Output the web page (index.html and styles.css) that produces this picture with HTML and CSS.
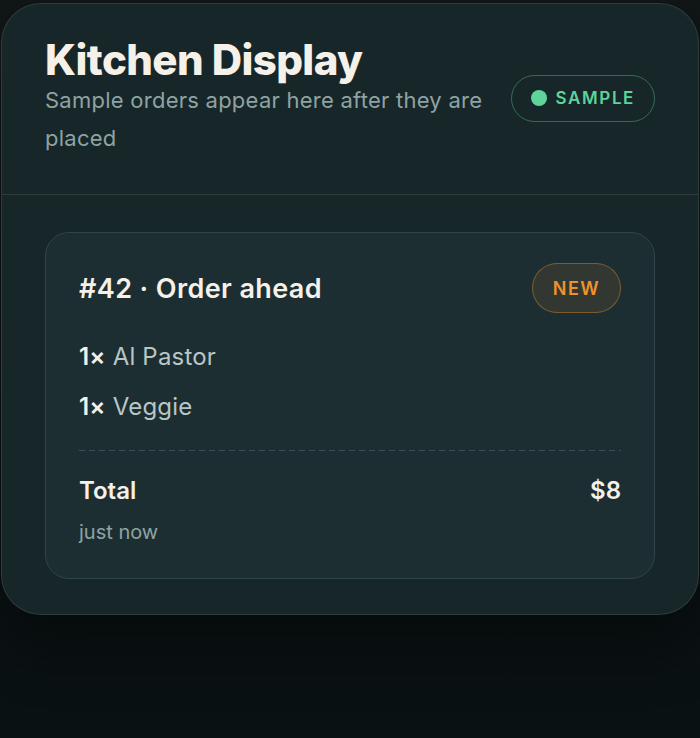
FILE: index.html
```html
<!DOCTYPE html>
<html lang="en">
<head>
    <meta charset="UTF-8">
    <title>Kitchen Display</title>
    <link rel="stylesheet" href="styles.css">
</head>
<body>
    <div class="kds">
        <div class="kds-header">
            <div class="kds-heading">
                <h1>Kitchen Display</h1>
                <p>Sample orders appear here after they are placed</p>
            </div>
            <span class="sample-pill"><span class="dot"></span>SAMPLE</span>
        </div>
        <div class="kds-orders">
            <div class="order-card">
                <div class="order-top">
                    <span class="order-title">#42 · Order ahead</span>
                    <span class="new-pill">NEW</span>
                </div>
                <ul class="order-items">
                    <li><b>1×</b> Al Pastor</li>
                    <li><b>1×</b> Veggie</li>
                </ul>
                <div class="order-total">
                    <span>Total</span>
                    <span>$8</span>
                </div>
                <div class="order-time">just now</div>
            </div>
        </div>
    </div>
</body>
</html>
```

FILE: styles.css
```css
body {
    margin: 0;
    min-height: 738px;
    background: linear-gradient(180deg, #111617 0%, #0c1315 60%, #0a1113 100%);
    font-family: Inter, "Noto Sans", sans-serif;
    color: #f3efe8;
}

.kds {
    margin: 3px 1px 0;
    background: #172629;
    border: 1px solid rgba(255,255,255,0.1);
    border-radius: 40px;
    box-shadow: 0 30px 60px rgba(0,0,0,0.45);
    overflow: hidden;
}

.kds-header {
    display: flex;
    align-items: center;
    gap: 28px;
    padding: 35px 43px 37px;
    border-bottom: 1px solid rgba(255,255,255,0.1);
}

.kds-heading {
    flex: 1;
}

.kds-heading h1 {
    margin: 0;
    font-weight: 800;
    font-size: 42px;
    line-height: 42px;
    letter-spacing: -0.6px;
    color: #f5f0e8;
}

.kds-heading p {
    margin: 0;
    font-size: 22px;
    line-height: 38px;
    letter-spacing: 0.25px;
    color: #8ea3a3;
}

.sample-pill {
    display: flex;
    align-items: center;
    gap: 9px;
    padding: 0 19px;
    height: 45px;
    border: 1px solid rgba(95,211,154,0.4);
    border-radius: 24px;
    color: #5fd39a;
    font-weight: 600;
    font-size: 17px;
    letter-spacing: 1.6px;
}

.sample-pill .dot {
    width: 16px;
    height: 16px;
    border-radius: 50%;
    background: #5fd39a;
}

.kds-orders {
    padding: 37px 43px 35px;
}

.order-card {
    background: #1d2e33;
    border: 1px solid #304549;
    border-radius: 24px;
    padding: 30px 33px 32px;
}

.order-top {
    display: flex;
    justify-content: space-between;
    align-items: center;
}

.order-title {
    font-weight: 600;
    font-size: 27px;
    letter-spacing: 0.4px;
    color: #f5f0e8;
}

.new-pill {
    display: flex;
    align-items: center;
    height: 48px;
    padding: 0 20px;
    border: 1px solid rgba(240,146,43,0.4);
    border-radius: 26px;
    background: rgba(240,146,43,0.1);
    color: #f0922b;
    font-weight: 600;
    font-size: 18px;
    letter-spacing: 1.4px;
}

.order-items {
    list-style: none;
    margin: 27px 0 0;
    padding: 0;
    display: flex;
    flex-direction: column;
    gap: 16px;
    font-size: 24px;
    line-height: 34px;
    letter-spacing: 0.2px;
    color: #b8c7c5;
}

.order-items b {
    font-weight: 600;
    color: #f5f0e8;
}

.order-total {
    display: flex;
    justify-content: space-between;
    margin-top: 26px;
    padding-top: 25px;
    background: repeating-linear-gradient(90deg, #3a5054 0 6px, transparent 6px 10px) top / 100% 1px no-repeat;
    font-weight: 600;
    font-size: 24px;
    line-height: 32px;
    color: #f5f0e8;
}

.order-time {
    margin-top: 11px;
    font-size: 20px;
    line-height: 28px;
    color: #8ea3a3;
}
```
